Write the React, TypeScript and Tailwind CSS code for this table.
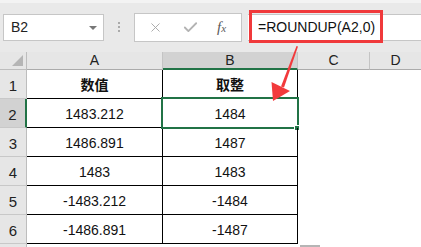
import { X, Check } from 'lucide-react';

const cellFont = { fontFamily: '"Liberation Sans", "Noto Sans CJK SC", sans-serif' };

const rows = [
  { a: '数值', b: '取整', head: true },
  { a: '1483.212', b: '1484' },
  { a: '1486.891', b: '1487' },
  { a: '1483', b: '1483' },
  { a: '-1483.212', b: '-1484' },
  { a: '-1486.891', b: '-1487' },
];

const ColHead = ({ label, active }: { label: string; active?: boolean }) => (
  <div
    className={
      'flex items-center justify-center text-[14px] text-[#222] border-r border-[#c4c4c4] ' +
      (active ? 'bg-[#d2d2d2] border-b-2 border-b-[#217346] text-[#1e5c3a]' : 'bg-[#e6e6e6] border-b border-b-[#ababab]')
    }
  >
    {label}
  </div>
);

const RowHead = ({ n, active }: { n: number; active?: boolean }) => (
  <div
    className={
      'flex items-end justify-center pb-[1px] text-[15px] text-[#222] border-b border-[#c8c8c8] ' +
      (active ? 'bg-[#d2d2d2] border-r-2 border-r-[#217346]' : 'bg-[#e6e6e6] border-r border-r-[#bdbdbd]')
    }
  >
    {n}
  </div>
);

function FormulaBar() {
  return (
    <div className="h-[52px] bg-[#e9e9e9] border-t-[3px] border-[#f3f3f3] flex items-start pt-[10px] relative">
      <div className="ml-[3px] mt-[1px] w-[101px] h-[27px] bg-white border border-[#c6c6c6] flex items-center justify-between pl-[7px] pr-[6px]">
        <span className="text-[14px] text-[#222]">B2</span>
        <span className="w-0 h-0 border-l-[4px] border-r-[4px] border-t-[4px] border-l-transparent border-r-transparent border-t-[#777]" />
      </div>
      <div className="ml-[14px] mt-[9px] flex flex-col gap-[2px]">
        <span className="w-[2px] h-[2px] bg-[#aaa]" />
        <span className="w-[2px] h-[2px] bg-[#aaa]" />
        <span className="w-[2px] h-[2px] bg-[#aaa]" />
      </div>
      <div className="ml-[14px] w-[108px] h-[29px] bg-white border border-[#c6c6c6] flex items-center pl-[13px]">
        <X size={15} strokeWidth={1.5} className="text-[#a8a8a8]" />
        <Check size={17} strokeWidth={2.6} className="text-[#b3b3b3] ml-[19px]" />
        <span
          className="ml-[18px] text-[15px] italic text-[#5a5a5a]"
          style={{ fontFamily: '"Liberation Serif", serif' }}
        >
          f<span className="text-[11px]">x</span>
        </span>
      </div>
      <div className="ml-[6px] mt-[1px] flex-1 h-[27px] bg-white border-y border-[#c6c6c6] flex items-center pl-[10px]">
        <span className="text-[14px] text-[#111]">=ROUNDUP(A2,0)</span>
      </div>
      {/* red annotation box */}
      <div className="absolute left-[249px] top-[7px] w-[134px] h-[33px] border-[3px] border-[#f0393b]" />
    </div>
  );
}

export default function App() {
  return (
    <div className="w-[421px] h-[247px] overflow-hidden bg-white relative" style={cellFont}>
      <FormulaBar />
      <div className="grid grid-cols-[27px_136px_135px_72px_1fr] grid-rows-[18px_repeat(6,29px)_1fr] h-[195px]">
        <div className="bg-[#e6e6e6] border-r border-b border-[#bdbdbd] relative">
          <svg className="absolute right-[3px] bottom-[3px]" width="11" height="11" viewBox="0 0 11 11">
            <polygon points="11,0 11,11 0,11" fill="#b5b5b5" />
          </svg>
        </div>
        <ColHead label="A" />
        <ColHead label="B" active />
        <ColHead label="C" />
        <div className="flex items-center justify-center text-[14px] text-[#222] bg-[#e6e6e6] border-b border-[#ababab]">D</div>

        {rows.map((r, i) => (
          <div key={i} className="contents">
            <RowHead n={i + 1} active={i === 1} />
            <div
              className={
                'flex items-center justify-center pt-[3px] text-[14px] text-[#111] border-b border-r border-black ' +
                (r.head ? 'font-bold' : '')
              }
            >
              {r.a}
            </div>
            <div
              className={
                'relative flex items-center justify-center pt-[3px] text-[14px] text-[#111] border-b border-r border-black ' +
                (r.head ? 'font-bold' : '')
              }
            >
              {r.b}
              {i === 1 && (
                <>
                  <div className="absolute -left-[2px] -top-[2px] w-[138px] h-[32px] border-2 border-[#217346]" />
                  <div className="absolute -right-[3px] -bottom-[4px] w-[6px] h-[6px] bg-[#217346] border border-white" />
                </>
              )}
            </div>
            <div />
            <div />
          </div>
        ))}

        <div className="bg-[#e6e6e6] border-r border-[#bdbdbd]" />
        <div />
        <div className="relative">
          <div className="absolute left-[137px] top-[1px] w-[20px] h-[2px] bg-[#b5b5b5]" />
        </div>
        <div />
        <div />
      </div>

      <svg className="absolute left-0 top-0 pointer-events-none" width="421" height="247" viewBox="0 0 421 247">
        <polygon points="296.5,46 298,46.5 284,87.5 281,86.5" fill="#f23a3c" />
        <polygon points="271.5,82 290,91 273,101" fill="#f23a3c" />
      </svg>
    </div>
  );
}
